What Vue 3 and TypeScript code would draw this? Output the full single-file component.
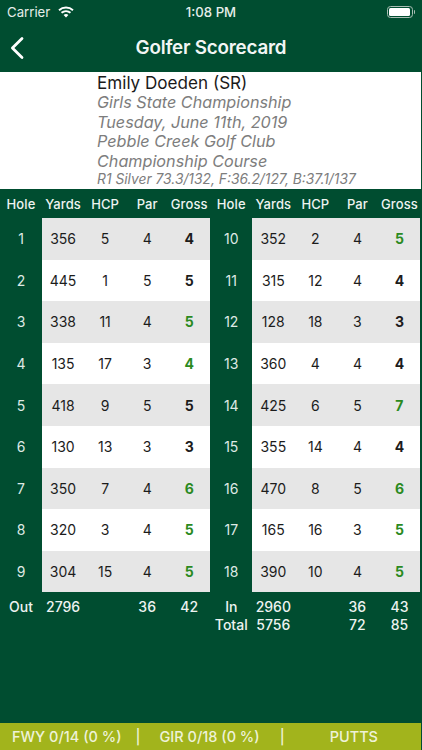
<script setup lang="ts">
interface Hole { h: number; y: number; c: number; p: number; g: number; green: boolean }
const raw: number[][] = [
  [1,356,5,4,4,0],[10,352,2,4,5,1],
  [2,445,1,5,5,0],[11,315,12,4,4,0],
  [3,338,11,4,5,1],[12,128,18,3,3,0],
  [4,135,17,3,4,1],[13,360,4,4,4,0],
  [5,418,9,5,5,0],[14,425,6,5,7,1],
  [6,130,13,3,3,0],[15,355,14,4,4,0],
  [7,350,7,4,6,1],[16,470,8,5,6,1],
  [8,320,3,4,5,1],[17,165,16,3,5,1],
  [9,304,15,4,5,1],[18,390,10,4,5,1],
]
const holes: Hole[] = raw.map(r => ({ h: r[0], y: r[1], c: r[2], p: r[3], g: r[4], green: r[5] === 1 }))
const rows: Hole[][] = []
for (let i = 0; i < holes.length; i += 2) rows.push([holes[i], holes[i + 1]])
const heads = ['Hole', 'Yards', 'HCP', 'Par', 'Gross', 'Hole', 'Yards', 'HCP', 'Par', 'Gross']
const totals = [
  ['Out', '2796', '', '36', '42', 'In', '2960', '', '36', '43'],
  ['', '', '', '', '', 'Total', '5756', '', '72', '85'],
]
</script>

<template>
  <div class="screen">
    <div class="status">
      <div class="status-left">
        <span>Carrier</span>
        <svg width="16" height="12" viewBox="0 0 16 12" class="wifi">
          <path d="M1 4.2C5 .6 11 .6 15 4.2" fill="none" stroke="#fff" stroke-width="1.9" />
          <path d="M3.5 6.8C6.1 4.6 9.9 4.6 12.5 6.8" fill="none" stroke="#fff" stroke-width="1.9" />
          <path d="M8 11.4 5.6 8.9C7 7.8 9 7.8 10.4 8.9Z" fill="#fff" />
        </svg>
      </div>
      <span class="time">1:08 PM</span>
      <div class="battery"><div class="battery-body"><div class="battery-fill"></div></div><div class="battery-tip"></div></div>
    </div>
    <div class="nav">
      <svg class="back" width="16" height="24" viewBox="0 0 16 24">
        <path d="M13 2.5 3.4 12 13 21.5" fill="none" stroke="#fff" stroke-width="2.8" stroke-linecap="round" stroke-linejoin="round" />
      </svg>
      <span class="title">Golfer Scorecard</span>
    </div>
    <div class="info">
      <div class="name">Emily Doeden (SR)</div>
      <div class="line">Girls State Championship</div>
      <div class="line">Tuesday, June 11th, 2019</div>
      <div class="line">Pebble Creek Golf Club</div>
      <div class="line">Championship Course</div>
      <div class="small">R1 Silver 73.3/132, F:36.2/127, B:37.1/137</div>
    </div>
    <div class="card">
      <div class="grid head">
        <span v-for="(t, i) in heads" :key="i">{{ t }}</span>
      </div>
      <div class="table">
        <div v-for="(r, i) in rows" :key="i" class="grid row">
          <template v-for="s in r" :key="s.h">
            <span class="hole">{{ s.h }}</span>
            <span class="cell" :class="{ odd: i % 2 === 0 }">{{ s.y }}</span>
            <span class="cell" :class="{ odd: i % 2 === 0 }">{{ s.c }}</span>
            <span class="cell" :class="{ odd: i % 2 === 0 }">{{ s.p }}</span>
            <span class="cell gross" :class="{ odd: i % 2 === 0, green: s.green }">{{ s.g }}</span>
          </template>
        </div>
      </div>
      <div class="totals">
        <div v-for="(t, i) in totals" :key="i" class="grid total">
          <span v-for="(v, j) in t" :key="j">{{ v }}</span>
        </div>
      </div>
    </div>
    <div class="footer">
      <span class="f1">FWY 0/14 (0 %)</span>
      <span class="f2">|</span>
      <span class="f3">GIR 0/18 (0 %)</span>
      <span class="f4">|</span>
      <span class="f5">PUTTS</span>
    </div>
  </div>
</template>

<style>
html, body { margin: 0; background: #004d30; }
</style>

<style scoped>
.screen {
  width: 422px;
  height: 750px;
  background: #004d30;
  display: flex;
  flex-direction: column;
  font-family: Inter, "Liberation Sans", sans-serif;
  color: #fff;
  overflow: hidden;
}
.status {
  height: 24px;
  flex: none;
  display: flex;
  align-items: center;
  justify-content: space-between;
  padding: 0 7px 0 7px;
  font-size: 13.2px;
  position: relative;
  color: #e6eeea;
}
.status-left { display: flex; align-items: center; gap: 8px; }
.wifi { display: block; }
.time { position: absolute; left: 0; right: 0; text-align: center; font-weight: 500; }
.battery { display: flex; align-items: center; }
.battery-body { width: 26px; height: 12.5px; border: 1px solid #a9bdb3; border-radius: 3.5px; padding: 1.5px; box-sizing: border-box; }
.battery-fill { width: 100%; height: 100%; background: #fff; border-radius: 1.5px; }
.battery-tip { width: 1.5px; height: 4px; background: #a9bdb3; margin-left: 1px; border-radius: 0 1px 1px 0; }
.nav {
  height: 48px;
  flex: none;
  display: flex;
  align-items: center;
  justify-content: center;
  padding-bottom: 2px;
  box-sizing: border-box;
  position: relative;
}
.back { position: absolute; left: 9px; top: 12px; }
.title { font-size: 18.8px; font-weight: 600; letter-spacing: -0.2px; color: #f2f6f4; }
.info {
  width: 421px;
  height: 117px;
  flex: none;
  background: #fff;
  box-sizing: border-box;
  padding: 1px 0 0 97px;
  color: #7d7d7d;
  font-style: italic;
  font-size: 16.2px;
  line-height: 19.6px;
  white-space: nowrap;
}
.name { color: #1a1a1a; font-style: normal; font-size: 17.1px; line-height: 20px; }
.small { font-size: 13.8px; line-height: 15px; margin-top: 1px; }
.card { flex: 1; display: flex; flex-direction: column; width: 421px; }
.grid { display: grid; grid-template-columns: repeat(10, 42.05px); }
.grid > span { text-align: center; white-space: nowrap; }
.head { height: 29px; align-items: center; font-size: 13px; font-weight: 500; color: #eef3f0; letter-spacing: 0.1px; }
.table { display: flex; flex-direction: column; }
.row { height: 41.6px; font-size: 14px; }
.row > span { display: flex; align-items: center; justify-content: center; }
.hole { color: #dfe9e4; }
.cell { background: #fff; color: #1c1c1c; }
.cell.odd { background: #e6e6e6; }
.gross { font-weight: 700; }
.green { color: #2b8a1f; }
.totals { padding-top: 5px; }
.total { height: 18px; align-items: center; font-size: 14px; font-weight: 500; color: #eef3f0; }
.footer {
  margin-top: auto;
  height: 27.5px;
  flex: none;
  width: 421px;
  background: #a2b41c;
  display: flex;
  align-items: center;
  font-size: 14.5px;
  font-weight: 500;
  color: #eef2d8;
  white-space: nowrap;
}
.f1 { margin-left: 12px; }
.f2 { margin-left: 14px; }
.f3 { margin-left: 19px; }
.f4 { margin-left: 20px; }
.f5 { margin-left: 45px; }
</style>
